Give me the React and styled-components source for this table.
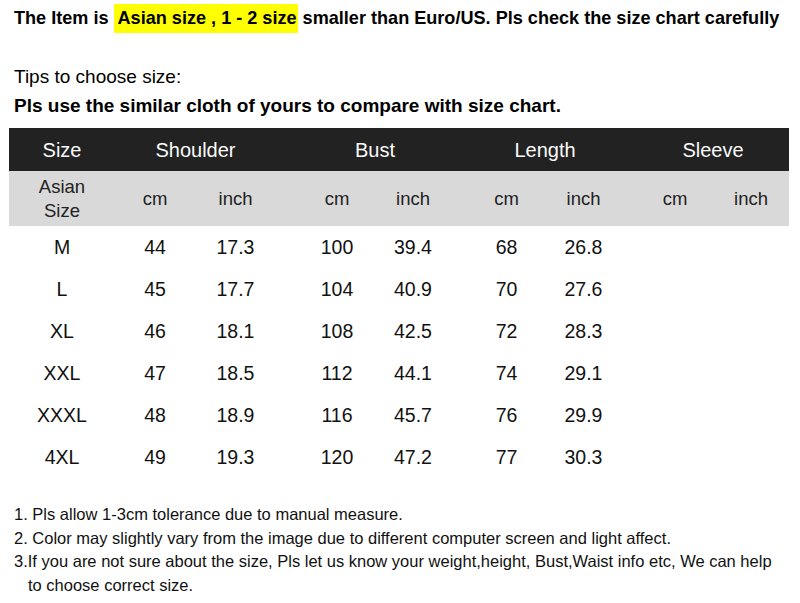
import React from "react";
import styled, { createGlobalStyle } from "styled-components";

const GlobalStyle = createGlobalStyle`
  body {
    margin: 0;
    background: #fff;
    font-family: "Liberation Sans", Arial, sans-serif;
    color: #000;
  }
`;

// data columns live on these tracks (spacer tracks between the groups)
const COLS = [1, 2, 3, 5, 6, 8, 9, 11, 12];

const rows = [
  ["M", "44", "17.3", "100", "39.4", "68", "26.8"],
  ["L", "45", "17.7", "104", "40.9", "70", "27.6"],
  ["XL", "46", "18.1", "108", "42.5", "72", "28.3"],
  ["XXL", "47", "18.5", "112", "44.1", "74", "29.1"],
  ["XXXL", "48", "18.9", "116", "45.7", "76", "29.9"],
  ["4XL", "49", "19.3", "120", "47.2", "77", "30.3"],
];

const groups = [
  { label: "Size", col: 1, span: 1 },
  { label: "Shoulder", col: 2, span: 2 },
  { label: "Bust", col: 5, span: 2 },
  { label: "Length", col: 8, span: 2 },
  { label: "Sleeve", col: 11, span: 2 },
];

const Page = styled.div`
  width: 800px;
  height: 603px;
  overflow: hidden;
`;

const Title = styled.div`
  padding: 4px 0 0 14px;
  font-size: 18.1px;
  font-weight: bold;
  line-height: 29px;
  white-space: nowrap;
`;

const Mark = styled.span`
  display: inline-block;
  background: #ffff00;
  padding: 0 1px 0 4px;
`;

const Tips = styled.div`
  margin: 32px 0 0 14px;
  font-size: 19px;
  line-height: 24px;
`;

const TipsBold = styled(Tips)`
  margin-top: 5px;
  font-weight: bold;
`;

const Table = styled.div`
  margin: 10px 0 0 9px;
  width: 780px;
`;

const Row = styled.div`
  display: grid;
  grid-template-columns: 106px 80px 81px 23px 76px 76px 17px 77px 77px 15px 76px 76px;
  align-items: center;
  height: ${(p) => p.$h}px;
  background: ${(p) => p.$bg || "transparent"};
  color: ${(p) => p.$color || "#111"};
  font-size: ${(p) => p.$size}px;
`;

const Cell = styled.div`
  grid-column: ${(p) => p.$col} / span ${(p) => p.$span || 1};
  text-align: center;
  line-height: 24px;
`;

const Notes = styled.div`
  margin: 25px 0 0 14px;
  width: 764px;
  font-size: 16.5px;
  line-height: 23.5px;
  color: #111;
`;

const Note = styled.div`
  padding-left: 14px;
  text-indent: -14px;
`;

export default function App() {
  return (
    <Page>
      <GlobalStyle />
      <Title>
        The Item is <Mark>Asian size , 1 - 2 size</Mark> smaller than Euro/US. Pls check the size chart carefully
      </Title>
      <Tips>Tips to choose size:</Tips>
      <TipsBold>Pls use the similar cloth of yours to compare with size chart.</TipsBold>

      <Table>
        <Row $h={43} $bg="#222222" $color="#fafafa" $size={20}>
          {groups.map((g) => (
            <Cell key={g.label} $col={g.col} $span={g.span}>
              {g.label}
            </Cell>
          ))}
        </Row>
        <Row $h={55} $bg="#d9d9d9" $color="#222" $size={18.5}>
          <Cell $col={1}>
            Asian
            <br />
            Size
          </Cell>
          {COLS.slice(1).map((c, i) => (
            <Cell key={c} $col={c}>
              {i % 2 === 0 ? "cm" : "inch"}
            </Cell>
          ))}
        </Row>
        {rows.map((r) => (
          <Row key={r[0]} $h={42} $size={19.5}>
            {r.map((v, i) => (
              <Cell key={i} $col={COLS[i]}>
                {v}
              </Cell>
            ))}
          </Row>
        ))}
      </Table>

      <Notes>
        <Note>1. Pls allow 1-3cm tolerance due to manual measure.</Note>
        <Note>2. Color may slightly vary from the image due to different computer screen and light affect.</Note>
        <Note>
          3.If you are not sure about the size, Pls let us know your weight,height, Bust,Waist info etc, We can help to choose correct size.
        </Note>
      </Notes>
    </Page>
  );
}
